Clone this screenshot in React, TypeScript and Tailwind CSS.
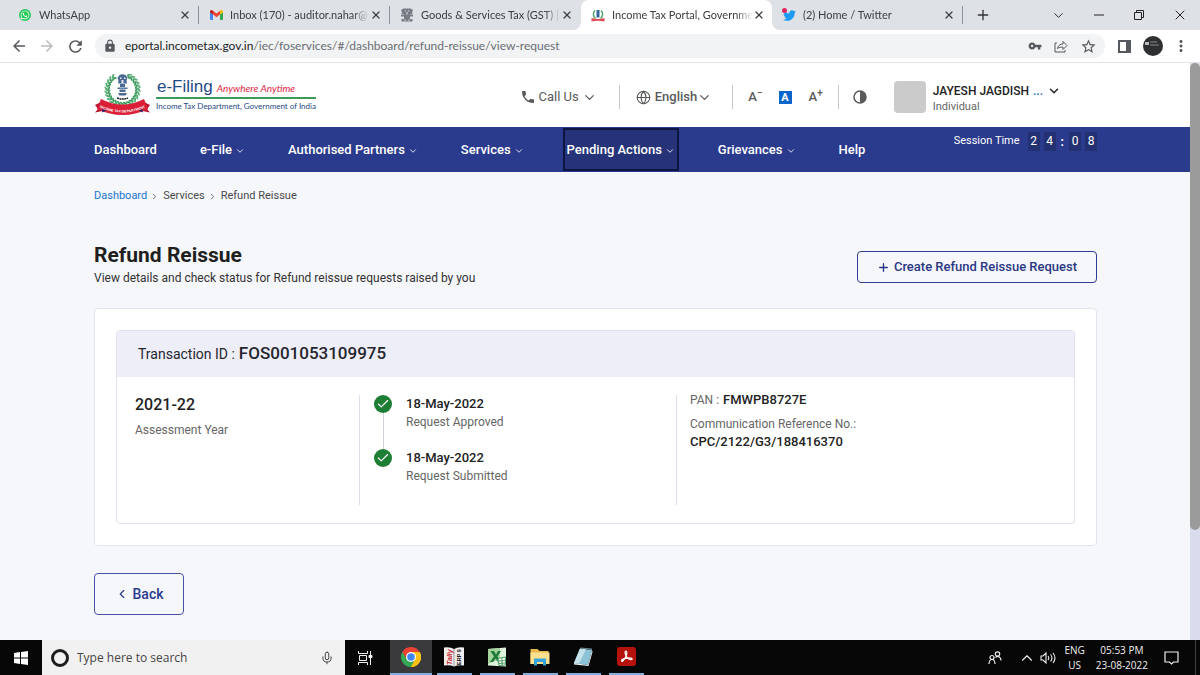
import { ReactNode } from 'react';
import { FaTwitter, FaWhatsapp } from 'react-icons/fa';
import { MdArrowBack, MdArrowForward, MdLock, MdMoreVert, MdPhone, MdRefresh, MdStarBorder, MdVpnKey } from 'react-icons/md';
import { Check, ChevronDown, ChevronLeft, ChevronRight, ChevronUp, Globe, Mic, Plus, X } from 'lucide-react';

interface Tab {
  title: string;
  icon: ReactNode;
  active?: boolean;
}

interface NavEntry {
  label: string;
  menu?: boolean;
  focused?: boolean;
}

function GmailIcon() {
  return (
    <svg className="w-[13px] h-[10px]" viewBox="0 0 26 20">
      <path d="M0 3v15a2 2 0 002 2h4V8z" fill="#4285f4" />
      <path d="M26 3v15a2 2 0 01-2 2h-4V8z" fill="#34a853" />
      <path d="M0 4V3a3 3 0 014.800-2.400L6 1.500V9L0 5z" fill="#c5221f" />
      <path d="M26 4V3a3 3 0 00-4.800-2.400L20 1.500V9l6-4z" fill="#fbbc04" />
      <path d="M6 1.500l7 5.500 7-5.500V9l-7 5.500L6 9z" fill="#ea4335" />
    </svg>
  );
}

function LionCapital({ className }: { className: string }) {
  return (
    <svg className={className} viewBox="0 0 28 28">
      <path d="M7 1h14l5 3-2 5 1 3H3l1-3-2-5z" />
      <path d="M8 11h12v4H8zM2 13h24v4H2zM8 17h12v5H8zM3 22h22v5H3z" />
      <path d="M10 5h2v2h-2zM16 5h2v2h-2zM13 8h2v5h-2zM9 23h2v3H9zM17 23h2v3h-2z" fill="#dee1e6" />
    </svg>
  );
}

function PortalIcon() {
  return (
    <svg className="w-[14px] h-[13px]" viewBox="0 0 28 26">
      <path d="M8 3C3 8 4 15 9 19M20 3c5 5 4 12-1 16" fill="none" stroke="#4fa36b" strokeWidth="3" />
      <path d="M11 2h6v15h-6z" fill="#35679f" />
      <path d="M1 18q13 4 26 0v7q-13-3-26 0z" fill="#dd4a56" />
    </svg>
  );
}

// wreath leaves, clockwise from the bottom, open at the top
const leaves = Array.from({ length: 24 }, (_, i) => 206 + i * 13);

function Emblem() {
  return (
    <svg className="w-[58px] h-[42px] shrink-0" viewBox="0 0 116 84">
      {leaves.map((deg) => (
        <g key={deg} transform={`rotate(${deg} 57 31)`}>
          <ellipse cx="57" cy="59" rx="5" ry="2" fill="#3c9a5f" transform="rotate(35 57 59)" />
          <ellipse cx="57" cy="64" rx="5" ry="2" fill="#57ad76" transform="rotate(-35 57 64)" />
        </g>
      ))}
      <g fill="#4a6a94">
        <path d="M51 2q6-3 12 0l4 5-2 6 1 6H48l1-6-2-5z" />
        <path d="M52 20h10v6H52zM47 27h20v3H47zM51 31h12v5H51zM48 38h18l-3 5H51z" />
      </g>
      <path d="M52 7h3v3h-3zM60 7h3v3h-3zM55 12h4v6h-4zM53 28h2v1h-2zM59 28h2v1h-2z" fill="#e6edf6" />
      <path d="M46 48q11 4 22 0" fill="none" stroke="#222" strokeWidth="3" strokeDasharray="4 1" />
      <path d="M2 62l14-7 6 18-20 4 6-7z" fill="#b9152c" />
      <path d="M112 62l-14-7-6 18 20 4-6-7z" fill="#b9152c" />
      <path d="M14 50q43 22 86 0l8 20q-51 24-102 0z" fill="#dc1f38" />
      <path d="M17 70l8 3-9 4zM97 70l-8 3 9 4z" fill="#2d2a6b" />
      <path id="ribbon" d="M11 67q46 20 92 0" fill="none" />
      <text className="font-['Liberation_Sans'] font-bold" fontSize="7" fill="#fff">
        <textPath href="#ribbon" startOffset="50%" textAnchor="middle">INCOME TAX DEPARTMENT</textPath>
      </text>
    </svg>
  );
}

function ChromeLogo() {
  return (
    <svg className="w-5 h-5" viewBox="0 0 48 48">
      <path d="M24 24L3.200 12A24 24 0 0144.800 12z" fill="#ea4335" />
      <path d="M24 24L44.800 12A24 24 0 0124 48z" fill="#fbc116" />
      <path d="M24 24v24A24 24 0 013.200 12z" fill="#34a853" />
      <path d="M24 12h20.800L34 30z" fill="#fbc116" />
      <path d="M3.200 12L14 30l10-18z" fill="#ea4335" />
      <path d="M14 30L3.200 12 24 48l10-18z" fill="#34a853" />
      <path d="M34 30L24 48A24 24 0 0044.800 12H24z" fill="#fbc116" />
      <circle cx="24" cy="24" r="12" fill="#fff" />
      <circle cx="24" cy="24" r="9" fill="#4285f4" />
    </svg>
  );
}

function TallyLogo() {
  return (
    <svg className="w-[22px] h-[22px]" viewBox="0 0 44 44">
      <path d="M2 3q12-2 20 3 8-5 20-3v36q-12-2-20 2-8-4-20-2z" fill="#f3eeee" />
      <path d="M22 6v35" stroke="#999" strokeWidth="2" />
      <text className="font-['Liberation_Sans'] font-bold italic" fontSize="14" fill="#c3262c" transform="translate(17 38) rotate(-90)">Tally</text>
      <text className="font-['Liberation_Sans'] font-bold" fontSize="11" fill="#222" transform="translate(36 38) rotate(-90)">ERP 9</text>
    </svg>
  );
}

function ExcelLogo() {
  return (
    <svg className="w-5 h-5" viewBox="0 0 40 40">
      <path d="M2 4l36-3v38L2 37z" fill="#dff0dc" />
      <path d="M2 4l24-2v22L2 34z" fill="#a6d49a" />
      <path d="M7 8h7l4 7 4-7h6l-7 11 8 11h-7l-5-7-5 7H6l8-11z" fill="#1d7a3c" />
      <path d="M22 23l15-3v16l-13 1z" fill="#fff" stroke="#4c9b5c" strokeWidth="2" />
      <path d="M24 28l12-1M24 33l12-1M30 22v14" stroke="#4c9b5c" strokeWidth="2" />
    </svg>
  );
}

function FolderLogo() {
  return (
    <svg className="w-5 h-[18px]" viewBox="0 0 40 36">
      <path d="M1 2h14l4 4h18v26H1z" fill="#e9b84c" />
      <path d="M1 9h38v23H1z" fill="#fbe08f" />
      <path d="M8 21h24v14h-6v-7H14v7H8z" fill="#36a3dd" />
    </svg>
  );
}

function NotepadLogo() {
  return (
    <svg className="w-5 h-5" viewBox="0 0 40 40">
      <path d="M14 3l24 3-8 30-28-4z" fill="#8cc3d6" />
      <path d="M14 3l12 1.500L12 33.500 2 32z" fill="#c4e2ea" />
      <path d="M2 32l28 4 8-30 1 4-8 28-29-3z" fill="#e8eef0" />
      <path d="M14 3l24 3v-3L15 1z" fill="#64818c" />
    </svg>
  );
}

function AcrobatLogo() {
  return (
    <svg className="w-[19px] h-[19px]" viewBox="0 0 38 38">
      <rect width="38" height="38" rx="6" fill="#b5120b" />
      <path
        d="M18 8c-3 0-2 6 1 11 2 4 7 7 10 6 3-1 0-4-7-3-6 0-14 3-13 6 2 3 8-6 10-12 1-4 1-8-1-8z"
        fill="none" stroke="#fff" strokeWidth="2.500" strokeLinejoin="round"
      />
    </svg>
  );
}

const tabs: Tab[] = [
  { title: 'WhatsApp', icon: <span className="flex w-3 h-3 items-center justify-center rounded-full bg-[#25c85a] text-white"><FaWhatsapp size={10} /></span> },
  { title: 'Inbox (170) - auditor.nahar@', icon: <GmailIcon /> },
  { title: 'Goods & Services Tax (GST) |', icon: <LionCapital className="w-[14px] h-[14px] fill-[#777b84]" /> },
  { title: 'Income Tax Portal, Governme', icon: <PortalIcon />, active: true },
  {
    title: '(2) Home / Twitter',
    icon: (
      <span className="relative">
        <FaTwitter size={13} color="#1d9bf0" />
        <span className="absolute -left-px -top-px w-[5px] h-[5px] rounded-full bg-[#e0245e]" />
      </span>
    ),
  },
];

const navEntries: NavEntry[] = [
  { label: 'Dashboard' },
  { label: 'e-File', menu: true },
  { label: 'Authorised Partners', menu: true },
  { label: 'Services', menu: true },
  { label: 'Pending Actions', menu: true, focused: true },
  { label: 'Grievances', menu: true },
  { label: 'Help' },
];

const steps = [
  { date: '18-May-2022', status: 'Request Approved' },
  { date: '18-May-2022', status: 'Request Submitted' },
];

const apps = [
  { name: 'Google Chrome', icon: <ChromeLogo />, active: true },
  { name: 'Tally ERP 9', icon: <TallyLogo /> },
  { name: 'Excel', icon: <ExcelLogo /> },
  { name: 'File Explorer', icon: <FolderLogo /> },
  { name: 'Notepad', icon: <NotepadLogo /> },
  { name: 'Adobe Acrobat', icon: <AcrobatLogo /> },
];

function TabStrip() {
  return (
    <div className="flex h-[30px] shrink-0 items-stretch bg-[#dee1e6] pl-2 text-[11px] text-[#3c4043]">
      {tabs.map((tab) => (
        <div
          key={tab.title}
          className={`relative flex w-[191px] min-w-0 items-center pl-[10px] pr-2 ${tab.active ? 'rounded-t-lg bg-white' : ''}`}
        >
          <span className="flex w-[14px] shrink-0 justify-center">{tab.icon}</span>
          <span className="ml-[7px] flex-1 whitespace-nowrap [mask-image:linear-gradient(to_right,black_88%,transparent)]">
            {tab.title}
          </span>
          <button aria-label={`Close ${tab.title}`}><X size={12} strokeWidth={2.5} /></button>
          {tab.active ? (
            <>
              <svg className="absolute -left-2 bottom-0 w-2 h-2" viewBox="0 0 8 8"><path d="M8 0v8H0a8 8 0 008-8z" fill="#fff" /></svg>
              <svg className="absolute -right-2 bottom-0 w-2 h-2" viewBox="0 0 8 8"><path d="M0 0v8h8a8 8 0 01-8-8z" fill="#fff" /></svg>
            </>
          ) : (
            tab.title.startsWith('Goods') || <span className="absolute right-0 top-[6px] w-px h-[18px] bg-[#8f9399]" />
          )}
        </div>
      ))}
      <button aria-label="New tab" className="ml-3 text-[#333]"><Plus size={16} /></button>
      <div className="ml-auto flex items-center gap-[26px] pr-3 text-[#222]">
        <button aria-label="Search tabs"><ChevronDown size={15} strokeWidth={1.5} /></button>
        <button aria-label="Minimize" className="w-[14px] h-[14px]"><svg viewBox="0 0 14 14"><path d="M2 7h10" stroke="currentColor" /></svg></button>
        <button aria-label="Restore" className="w-[14px] h-[14px]">
          <svg viewBox="0 0 14 14" fill="none" stroke="currentColor"><path d="M2.500 4.500h7v7h-7zM4.500 4.500v-2h7v7h-2" /></svg>
        </button>
        <button aria-label="Close window"><X size={16} strokeWidth={1.5} /></button>
      </div>
    </div>
  );
}

function Toolbar() {
  return (
    <div className="flex h-[33px] shrink-0 items-center border-b border-[#e3e4e6] bg-white pl-[10px] pr-[10px] text-[#55585c]">
      <button aria-label="Back"><MdArrowBack size={18} /></button>
      <button aria-label="Forward" className="ml-[10px] text-[#b9bbbe]"><MdArrowForward size={18} /></button>
      <button aria-label="Reload" className="ml-[10px]"><MdRefresh size={19} /></button>
      <div className="ml-[10px] flex h-6 min-w-0 flex-1 items-center rounded-full bg-[#f1f3f4] pl-2 pr-2">
        <MdLock size={14} />
        <span className="ml-2 flex-1 whitespace-nowrap text-[12px] text-[#6b6e73]">
          <span className="text-[#202124]">eportal.incometax.gov.in</span>/iec/foservices/#/dashboard/refund-reissue/view-request
        </span>
        <div className="flex items-center gap-3">
          <button aria-label="Passwords"><MdVpnKey size={14} /></button>
          <button aria-label="Share" className="w-[14px] h-[14px]">
            <svg viewBox="0 0 14 14" fill="none" stroke="currentColor" strokeLinejoin="round">
              <path d="M3 4H1v9h10v-2M3.500 9.500C4 6.500 6 5 9 5V2.500l4 4-4 4V8C6.500 8 5 8.500 3.500 9.500z" />
            </svg>
          </button>
          <button aria-label="Bookmark"><MdStarBorder size={17} /></button>
        </div>
      </div>
      <button aria-label="Side panel" className="ml-[13px] w-[13px] h-[13px]">
        <svg viewBox="0 0 13 13"><path d="M1 1h11v11H1z" fill="none" stroke="currentColor" strokeWidth="2" /><path d="M8 1h4v11H8z" fill="currentColor" /></svg>
      </button>
      <button aria-label="Profile" className="ml-3 w-5 h-5 rounded-full bg-[#2e2f31]">
        <svg viewBox="0 0 20 20"><path d="M2 6h4v3H2z" fill="#bbb" /><path d="M7 6h7M7 9h9" stroke="#888" /></svg>
      </button>
      <button aria-label="Menu" className="ml-[9px]"><MdMoreVert size={18} /></button>
    </div>
  );
}

function PortalHeader() {
  return (
    <header className="flex h-16 items-center bg-white pl-[94px] pt-1 text-[13px] text-[#5a5a5a]">
      <a href="#home" className="mb-1 flex items-center gap-1">
        <Emblem />
        <span className="flex flex-col whitespace-nowrap font-['Lato',sans-serif]">
          <span className="flex items-baseline gap-1 border-b-2 border-[#3a9a58] pl-px text-[#1f4a85]">
            <span className="font-['Liberation_Sans'] text-[17px] leading-5">e-Filing</span>
            <span className="text-[10px] italic text-[#e0243f]">Anywhere Anytime</span>
          </span>
          <span className="text-[8px] leading-[14px] text-[#1f4a85]">Income Tax Department, Government of India</span>
        </span>
      </a>
      <div className="ml-auto flex items-center">
        <button className="flex items-center gap-[3px]">
          <MdPhone size={16} />Call Us<ChevronDown size={15} />
        </button>
        <span className="ml-[22px] mr-6 w-px h-6 bg-[#c6c6c6]" />
        <button className="flex items-center gap-1 font-medium">
          <Globe size={15} strokeWidth={1.75} className="-ml-2" />English<ChevronDown size={15} className="-ml-1" />
        </button>
        <span className="ml-5 mr-[19px] w-px h-6 bg-[#c6c6c6]" />
        <button aria-label="Smaller text" className="flex font-medium -ml-1">A<span className="text-[10px] leading-3">−</span></button>
        <button aria-label="Normal text" className="ml-4 w-[13px] h-[13px] bg-[#0b66cc] text-center text-[11px] font-bold leading-[13px] text-white">A</button>
        <button aria-label="Larger text" className="ml-[17px] flex font-medium">A<span className="text-[10px] leading-3">+</span></button>
        <span className="ml-[15px] mr-[14px] w-px h-6 bg-[#c6c6c6]" />
        <button aria-label="Contrast" className="w-[14px] h-[14px]">
          <svg viewBox="0 0 14 14"><circle cx="7" cy="7" r="6" fill="none" stroke="currentColor" strokeWidth="1.5" /><path d="M7 1a6 6 0 010 12z" fill="currentColor" /></svg>
        </button>
      </div>
      <button className="ml-[27px] mr-[129px] flex items-center text-left">
        <span className="w-8 h-8 rounded bg-[#cbcbcb]" />
        <span className="ml-[7px] flex flex-col pt-1">
          <span className="flex items-center leading-4 text-[12px] font-medium text-[#222]">
            JAYESH JAGDISH<span className="ml-1 text-[#1a73c9]">...</span>
            <ChevronDown size={14} strokeWidth={2.5} className="ml-1" />
          </span>
          <span className="text-[11px] leading-4 text-[#666]">Individual</span>
        </span>
      </button>
    </header>
  );
}

function PortalNav() {
  return (
    <nav className="flex h-[45px] items-center bg-[#2a3a8c] pl-[94px] text-[13px] font-medium text-white">
      <div className="flex items-center gap-[43px]">
        {navEntries.map((entry) => (
          <a
            key={entry.label}
            href="#menu"
            className={`flex items-center gap-[3px] whitespace-nowrap ${entry.focused ? 'h-[43px] border-2 border-[#0d1640] bg-[#263379] px-[2px] -mx-1' : ''}`}
          >
            {entry.label}
            {entry.menu && <ChevronDown size={10} className="mt-[2px]" />}
          </a>
        ))}
      </div>
      <div className="ml-auto mr-[93px] mb-4 flex items-center gap-1 text-[12px] font-normal">
        <span className="mr-1 text-[11px]">Session Time</span>
        {['2', '4', ':', '0', '8'].map((digit, i) => (
          <span key={i} className={digit === ':' ? 'px-px font-bold' : 'w-3 bg-[#233072] text-center leading-[19px]'}>{digit}</span>
        ))}
      </div>
    </nav>
  );
}

function RequestCard() {
  return (
    <section className="mt-[21px] rounded-sm border border-[#e3e4ef] bg-white p-[21px]">
      <div className="rounded border border-[#e0e1ec]">
        <h2 className="flex h-[46px] items-center gap-1 bg-[#eeeef8] pl-[21px] text-[14px] text-[#26262e]">
          Transaction ID : <span className="text-[17px] font-medium">FOS001053109975</span>
        </h2>
        <div className="flex py-[18px] text-[12px] text-[#666]">
          <div className="w-[243px] shrink-0 border-r border-[#dcdde8] pl-[18px]">
            <p className="text-[16px] font-medium leading-5 text-[#222]">2021-22</p>
            <p className="mt-[6px] leading-[18px]">Assessment Year</p>
          </div>
          <ol className="min-h-[110px] w-[317px] shrink-0 border-r border-[#dcdde8] pl-[14px]">
            {steps.map((step, i) => (
              <li key={step.status} className="flex gap-[14px]">
                <div className="flex flex-col items-center">
                  <span className="flex w-[18px] h-[18px] items-center justify-center rounded-full bg-[#1e7e34] text-white">
                    <Check size={14} />
                  </span>
                  {i < steps.length - 1 && <span className="w-px flex-1 bg-[#cfd0e0]" />}
                </div>
                <div className={i < steps.length - 1 ? 'pb-[18px]' : ''}>
                  <p className="text-[13px] font-medium leading-[18px] text-[#222]">{step.date}</p>
                  <p className="leading-[18px]">{step.status}</p>
                </div>
              </li>
            ))}
          </ol>
          <dl className="pl-[13px] leading-[18px]">
            <div className="-mt-1 flex gap-1">
              <dt>PAN :</dt>
              <dd className="text-[13px] font-medium text-[#222]">FMWPB8727E</dd>
            </div>
            <dt className="mt-[6px]">Communication Reference No.:</dt>
            <dd className="text-[13px] font-medium text-[#222]">CPC/2122/G3/188416370</dd>
          </dl>
        </div>
      </div>
    </section>
  );
}

function Taskbar() {
  return (
    <footer className="flex h-[35px] shrink-0 items-stretch bg-[#070707] font-['Open_Sans','Noto_Sans',sans-serif] text-[10px] text-[#f0f0f0]">
      <button aria-label="Start" className="flex w-[42px] items-center justify-center">
        <svg className="w-[14px] h-[14px]" viewBox="0 0 28 28" fill="#fff"><path d="M0 4l12-2v11H0zM14 2l14-2v13H14zM0 15h12v11L0 24zM14 15h14v13l-14-2z" /></svg>
      </button>
      <label className="flex w-[303px] items-center gap-2 bg-[#f1f1f1] pl-[9px] pr-[11px] text-[#333]">
        <span className="w-[18px] h-[18px] shrink-0 rounded-full border-[3px] border-[#1d1d1d]" />
        <input aria-label="Search" placeholder="Type here to search" className="min-w-0 flex-1 bg-transparent text-[12px] outline-none placeholder:text-[#444]" />
        <Mic size={14} strokeWidth={1.5} />
      </label>
      <button aria-label="Task view" className="flex w-[45px] items-center justify-center pr-1">
        <svg className="w-[15px] h-[14px]" viewBox="0 0 15 14" fill="none" stroke="currentColor">
          <path d="M.5 0v2.500h9V0M.5 14v-2.500h9V14M1.500 4.500h7v5h-7zM12.500 0v14" />
          <path d="M11 4.500h3v2h-3z" fill="currentColor" />
        </svg>
      </button>
      <div className="flex gap-px">
        {apps.map((app) => (
          <button key={app.name} aria-label={app.name} className={`flex w-[42px] flex-col items-center ${app.active ? 'bg-[#3a3a3c]' : ''}`}>
            <span className="flex flex-1 items-center">{app.icon}</span>
            <span className={`h-[2px] bg-[#7eaedb] ${app.active ? 'w-full' : 'w-[35px]'}`} />
          </button>
        ))}
      </div>
      <div className="ml-auto flex items-center">
        <svg className="w-[14px] h-[14px]" viewBox="0 0 14 14" fill="none" stroke="currentColor" strokeWidth="1.2">
          <circle cx="4" cy="6.500" r="2" /><path d="M1 13c0-6 6-6 6 0" />
          <circle cx="9.500" cy="3" r="2.200" /><path d="M7.500 6.500c3-2.500 5.500 0 5.500 3" />
        </svg>
        <ChevronUp size={18} strokeWidth={1.5} className="ml-4" />
        <svg className="ml-1 w-4 h-[14px]" viewBox="0 0 16 14" fill="none" stroke="currentColor" strokeWidth="1.1">
          <path d="M1 5h2l3-3v10L3 9H1zM8 5q1.500 2 0 4M10.500 3.500q3 3.500 0 7M13 2q4 5 0 10" />
        </svg>
        <span className="ml-2 text-center leading-[15px]">ENG<br />US</span>
        <time className="ml-[11px] text-center leading-[15px]">05:53 PM<br />23-08-2022</time>
        <button aria-label="Notifications" className="ml-4">
          <svg className="w-[15px] h-[14px]" viewBox="0 0 15 14" fill="none" stroke="currentColor" strokeWidth="1.2"><path d="M1 1h13v10H9.500L7.500 13 5.500 11H1z" /></svg>
        </button>
        <span className="ml-[16px] mr-1 h-full w-px bg-[#444]" />
      </div>
    </footer>
  );
}

export default function App() {
  return (
    <div className="flex h-screen flex-col overflow-hidden font-['Lato','Open_Sans',sans-serif]">
      <TabStrip />
      <Toolbar />
      <div className="flex min-h-0 flex-1 font-['Roboto',sans-serif]">
        <div className="min-w-0 flex-1 overflow-hidden bg-[#f6f7fb]">
          <PortalHeader />
          <PortalNav />
          <main className="pl-[94px] pr-[93px] pt-4">
            <nav aria-label="Breadcrumb" className="flex items-center gap-[3px] text-[11px] leading-4 text-[#4a4a4a]">
              <a href="#dashboard" className="text-[#1a73d0]">Dashboard</a>
              <ChevronRight size={9} />
              <a href="#services" className="ml-px">Services</a>
              <ChevronRight size={9} />
              <span className="ml-px">Refund Reissue</span>
            </nav>
            <div className="mt-[38px] flex items-center justify-between">
              <div>
                <h1 className="text-[21px] font-bold leading-[26px] text-[#1f1f1f]">Refund Reissue</h1>
                <p className="mt-px text-[12px] leading-[18px] text-[#333]">
                  View details and check status for Refund reissue requests raised by you
                </p>
              </div>
              <button className="mt-[5px] flex h-8 w-[240px] items-center justify-center gap-1 rounded border border-[#2f3c8f] text-[13px] font-medium text-[#2a3784]">
                <Plus size={13} strokeWidth={2.5} />Create Refund Reissue Request
              </button>
            </div>
            <RequestCard />
            <button className="mt-[27px] flex h-[42px] w-[90px] items-center justify-center gap-1 rounded border border-[#4753a0] text-[14px] font-medium text-[#2a3a8c]">
              <ChevronLeft size={14} />Back
            </button>
          </main>
        </div>
        <div className="w-[10px] shrink-0 bg-[#d9dcec]">
          <div className="h-[81%] rounded-full bg-[#9b9b9b]" />
        </div>
      </div>
      <Taskbar />
    </div>
  );
}
